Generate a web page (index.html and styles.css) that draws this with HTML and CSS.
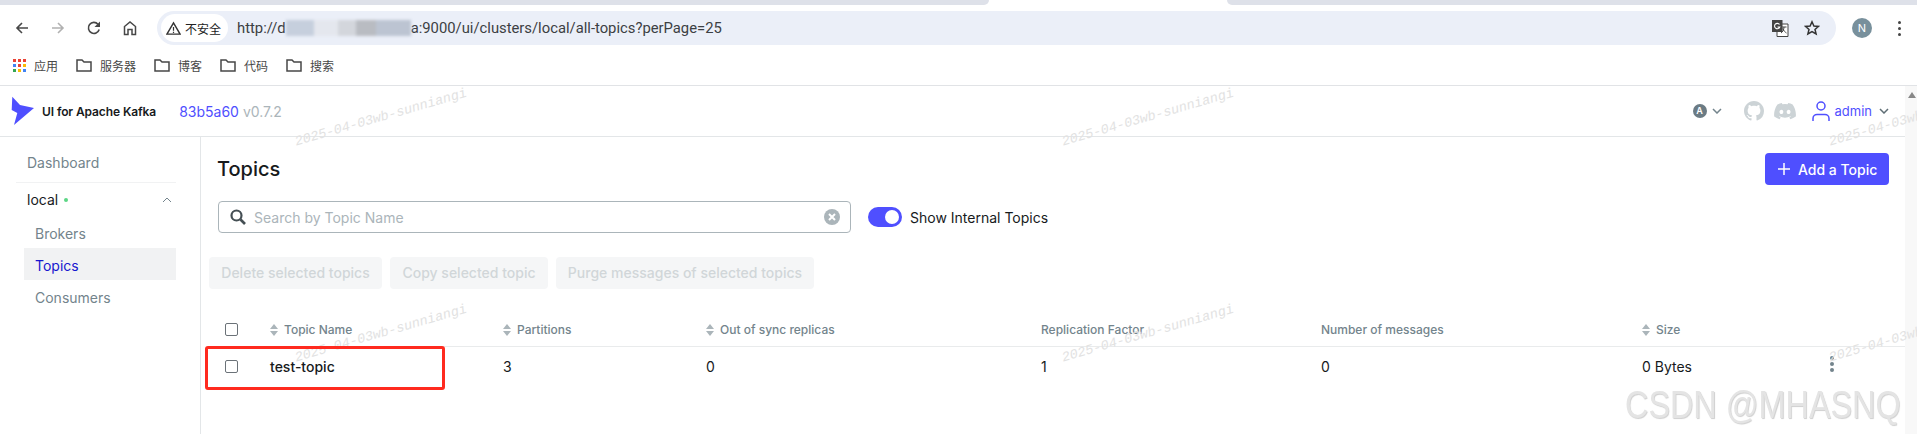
FILE: index.html
```html
<!DOCTYPE html>
<html lang="en">
<head>
    <meta charset="UTF-8">
    <title>UI for Apache Kafka</title>
    <link rel="stylesheet" href="styles.css">
</head>
<body>
    <div class="tabstrip">
        <div class="tab-rest tab-left"></div>
        <div class="tab-active"></div>
        <div class="tab-rest tab-right"></div>
    </div>

    <div class="toolbar">
        <div class="nav-icons">
            <svg class="nav-icon" viewBox="0 0 16 16"><path d="M14 8H3M8 3 3 8l5 5" fill="none" stroke="#474747" stroke-width="1.6"/></svg>
            <svg class="nav-icon" viewBox="0 0 16 16"><path d="M2 8h11M8 3l5 5-5 5" fill="none" stroke="#b1b1b1" stroke-width="1.6"/></svg>
            <svg class="nav-icon" viewBox="0 0 16 16"><path d="M13.2 9.5A5.5 5.5 0 1 1 12 4.2" fill="none" stroke="#474747" stroke-width="1.6"/><path d="M14 1.5V7H8.5z" fill="#474747"/></svg>
            <svg class="nav-icon" viewBox="0 0 16 16"><path d="M2.5 14.5V6.5L8 2l5.500 4.500v8H10V9.500H6v5z" fill="none" stroke="#474747" stroke-width="1.500"/></svg>
        </div>
        <div class="urlbar">
            <div class="secure-chip">
                <svg class="warn-icon" viewBox="0 0 16 16"><path d="M8 2 15 14H1z" fill="none" stroke="#333" stroke-width="1.500"/><path d="M8 6.500v4M8 11.500v1.300" stroke="#333" stroke-width="1.300"/></svg>
                <span>不安全</span>
            </div>
            <div class="url">http://d<span class="url-blur"><i></i><i></i><i></i><i></i><i></i></span>a:9000/ui/clusters/local/all-topics?perPage=25</div>
            <svg class="translate-icon" viewBox="0 0 18 18"><path d="M6 5h11v12.500H6z" fill="#fff" stroke="#444"/><rect x="1" y="1" width="10.500" height="12" fill="#444"/><path d="M8.500 5.500A2.700 2.700 0 1 0 8.800 8H6.500" fill="none" stroke="#fff" stroke-width="1.100"/><path d="M11 8h4.500M13 8c0 3-1.500 5-3 6M11.500 9.500c1 2 2.500 3.500 4 4.500" fill="none" stroke="#444"/></svg>
            <svg class="star-icon" viewBox="0 0 16 16"><path d="m8 1.800 1.900 4.200 4.600.4-3.500 3 1.100 4.500L8 11.500l-4.100 2.400L5 9.400l-3.500-3 4.600-.4z" fill="none" stroke="#333" stroke-width="1.500"/></svg>
        </div>
        <div class="avatar">N</div>
        <div class="chrome-dots"><i></i><i></i><i></i></div>
    </div>

    <div class="bookmarks">
        <div class="apps-grid"><i class="c-red"></i><i class="c-red"></i><i class="c-red"></i><i class="c-blue"></i><i class="c-red"></i><i class="c-yellow"></i><i class="c-green"></i><i class="c-yellow"></i><i class="c-blue"></i></div>
        <span class="bookmark-label first">应用</span>
        <svg class="folder" viewBox="0 0 16 14"><path d="M1 2h5l2 2h7v9H1z" fill="none" stroke="#474747" stroke-width="1.500"/></svg>
        <span class="bookmark-label">服务器</span>
        <svg class="folder" viewBox="0 0 16 14"><path d="M1 2h5l2 2h7v9H1z" fill="none" stroke="#474747" stroke-width="1.500"/></svg>
        <span class="bookmark-label">博客</span>
        <svg class="folder" viewBox="0 0 16 14"><path d="M1 2h5l2 2h7v9H1z" fill="none" stroke="#474747" stroke-width="1.500"/></svg>
        <span class="bookmark-label">代码</span>
        <svg class="folder" viewBox="0 0 16 14"><path d="M1 2h5l2 2h7v9H1z" fill="none" stroke="#474747" stroke-width="1.500"/></svg>
        <span class="bookmark-label">搜索</span>
    </div>

    <div class="app">
        <div class="navbar">
            <svg class="logo" viewBox="0 0 25 30"><path d="M2.300.7 10 9l14 3L4 29l3.300-12-5.600-3z" fill="#4f4fff"/></svg>
            <span class="brand">UI for Apache Kafka</span>
            <span class="version"><span class="commit">83b5a60</span> v0.7.2</span>
            <div class="navbar-right">
                <span class="theme-badge">A</span>
                <svg class="chevron theme-chevron" viewBox="0 0 10 6"><path d="M1 1l4 4 4-4" fill="none" stroke="#73848c" stroke-width="1.500"/></svg>
                <svg class="github" viewBox="0 0 16 16"><path fill="#ccd3d6" d="M8 0C3.580 0 0 3.580 0 8c0 3.540 2.290 6.530 5.470 7.590.4.070.55-.17.550-.38 0-.19-.01-.82-.01-1.490-2.010.37-2.530-.49-2.690-.94-.09-.23-.48-.94-.82-1.130-.28-.15-.68-.52-.01-.53.630-.01 1.080.58 1.230.82.720 1.210 1.870.87 2.330.66.070-.52.280-.87.510-1.070-1.780-.2-3.640-.89-3.640-3.950 0-.87.310-1.590.820-2.150-.08-.2-.36-1.020.08-2.120 0 0 .67-.21 2.200.82.640-.18 1.320-.27 2-.27s1.360.09 2 .27c1.530-1.040 2.200-.82 2.200-.82.440 1.100.16 1.920.08 2.120.51.560.82 1.270.82 2.150 0 3.070-1.870 3.750-3.650 3.950.29.25.54.73.54 1.480 0 1.070-.01 1.930-.01 2.200 0 .21.150.46.550.38A8.010 8.010 0 0 0 16 8c0-4.420-3.580-8-8-8z"/></svg>
                <svg class="discord" viewBox="0 0 22 17"><path fill="#ccd3d6" d="M18.600 1.400A18 18 0 0 0 14.200 0l-.6 1.200a17 17 0 0 0-5.200 0L7.800 0a18 18 0 0 0-4.400 1.400C.6 5.500-.2 9.500.2 13.500A18 18 0 0 0 5.600 16.200l1.100-1.800a11 11 0 0 1-1.700-.8l.4-.3a13 13 0 0 0 11.200 0l.4.300a11 11 0 0 1-1.700.8l1.100 1.800a18 18 0 0 0 5.400-2.700c.5-4.600-.8-8.600-3.200-12.100zM7.400 11.100c-1.100 0-1.900-1-1.900-2.200s.8-2.200 1.900-2.200 2 1 1.900 2.200c0 1.200-.8 2.200-1.900 2.200zm7.200 0c-1.100 0-1.900-1-1.900-2.200s.8-2.200 1.900-2.200 2 1 1.900 2.200c0 1.200-.8 2.200-1.900 2.200z"/></svg>
                <svg class="user-icon" viewBox="0 0 18 20"><circle cx="9" cy="5" r="4" fill="none" stroke="#4f4fff" stroke-width="1.500"/><path d="M1 20v-2.500c0-2.500 2-4 4-4h8c2 0 4 1.500 4 4V20" fill="none" stroke="#4f4fff" stroke-width="1.500"/></svg>
                <span class="admin">admin</span>
                <svg class="chevron" viewBox="0 0 10 6"><path d="M1 1l4 4 4-4" fill="none" stroke="#5f6e75" stroke-width="1.500"/></svg>
            </div>
        </div>

        <div class="layout">
            <div class="sidebar">
                <div class="menu-item dashboard">Dashboard</div>
                <div class="cluster-row">
                    <span class="cluster-name">local</span>
                    <span class="status-dot"></span>
                    <svg class="cluster-toggle" viewBox="0 0 10 6"><path d="M1 5l4-4 4 4" fill="none" stroke="#73848c" stroke-width="1"/></svg>
                </div>
                <div class="menu-item sub">Brokers</div>
                <div class="menu-item sub active">Topics</div>
                <div class="menu-item sub">Consumers</div>
            </div>

            <div class="content">
                <div class="page-head">
                    <h1>Topics</h1>
                    <button class="add-btn" type="button">
                        <svg class="plus" viewBox="0 0 12 12"><path d="M6 0v12M0 6h12" stroke="#fff" stroke-width="1.500"/></svg>
                        Add a Topic
                    </button>
                </div>

                <div class="search-row">
                    <div class="search">
                        <svg class="search-icon" viewBox="0 0 16 16"><circle cx="6.500" cy="6.500" r="5" fill="none" stroke="#454f54" stroke-width="2.200"/><path d="m10.500 10.500 4.500 4.500" stroke="#454f54" stroke-width="2.600"/></svg>
                        <span class="placeholder">Search by Topic Name</span>
                        <svg class="clear-icon" viewBox="0 0 16 16"><circle cx="8" cy="8" r="8" fill="#abb5ba"/><path d="m5 5 6 6m0-6-6 6" stroke="#fff" stroke-width="2"/></svg>
                    </div>
                    <div class="switch"><span class="knob"></span></div>
                    <span class="switch-label">Show Internal Topics</span>
                </div>

                <div class="batch-actions">
                    <div class="batch-btn btn-delete">Delete selected topics</div>
                    <div class="batch-btn btn-copy">Copy selected topic</div>
                    <div class="batch-btn btn-purge">Purge messages of selected topics</div>
                </div>

                <table class="topics">
                    <colgroup>
                        <col class="col-check">
                        <col class="col-name">
                        <col class="col-partitions">
                        <col class="col-sync">
                        <col class="col-replication">
                        <col class="col-messages">
                        <col class="col-size">
                        <col>
                    </colgroup>
                    <thead>
                        <tr>
                            <th><input type="checkbox"></th>
                            <th><svg class="sort" viewBox="0 0 8 12"><path d="M4 0l4 5H0zM4 12 0 7h8z"/></svg>Topic Name</th>
                            <th><svg class="sort" viewBox="0 0 8 12"><path d="M4 0l4 5H0zM4 12 0 7h8z"/></svg>Partitions</th>
                            <th><svg class="sort" viewBox="0 0 8 12"><path d="M4 0l4 5H0zM4 12 0 7h8z"/></svg>Out of sync replicas</th>
                            <th>Replication Factor</th>
                            <th>Number of messages</th>
                            <th><svg class="sort" viewBox="0 0 8 12"><path d="M4 0l4 5H0zM4 12 0 7h8z"/></svg>Size</th>
                            <th></th>
                        </tr>
                    </thead>
                    <tbody>
                        <tr>
                            <td><input type="checkbox"></td>
                            <td class="topic-name">test-topic</td>
                            <td>3</td>
                            <td>0</td>
                            <td>1</td>
                            <td>0</td>
                            <td>0 Bytes</td>
                            <td><div class="row-dots"><i></i><i></i><i></i></div></td>
                        </tr>
                    </tbody>
                </table>
            </div>
            <div class="scrollbar"><span class="scroll-up"></span></div>
        </div>

        <div class="watermarks">
            <span>2025-04-03wb-sunniangi</span>
            <span>2025-04-03wb-sunniangi</span>
            <span>2025-04-03wb-sunniangi</span>
            <span>2025-04-03wb-sunniangi</span>
            <span>2025-04-03wb-sunniangi</span>
            <span>2025-04-03wb-sunniangi</span>
        </div>
        <div class="highlight-box"></div>
        <div class="csdn-mark">CSDN @MHASNQ</div>
    </div>
</body>
</html>
```

FILE: styles.css
```css
* {
    margin: 0;
    padding: 0;
    box-sizing: border-box;
}

html, body {
    width: 1917px;
    height: 434px;
    overflow: hidden;
}

body {
    font-family: Inter, "Noto Sans CJK SC", sans-serif;
    background: #fff;
    position: relative;
}

/* browser chrome */
.tabstrip {
    display: flex;
    height: 5px;
    background: #fff;
}

.tab-rest {
    background: #dee1e9;
    height: 5px;
}

.tab-left {
    width: 989px;
    border-bottom-right-radius: 6px;
}

.tab-active {
    width: 238px;
}

.tab-right {
    flex: 1;
    border-bottom-left-radius: 6px;
}

.toolbar {
    display: flex;
    align-items: center;
    height: 40px;
    padding-top: 6px;
    border-radius: 8px 8px 0 0;
    position: relative;
}

.nav-icons {
    display: flex;
    gap: 20px;
    padding-left: 14px;
    width: 157px;
}

.nav-icon {
    width: 16px;
    height: 16px;
}

.urlbar {
    display: flex;
    align-items: center;
    width: 1679px;
    height: 34px;
    background: #ebeff8;
    border-radius: 17px;
    padding-left: 4px;
}

.secure-chip {
    display: flex;
    align-items: center;
    gap: 4px;
    width: 67px;
    height: 28px;
    padding-left: 5px;
    background: #fff;
    border-radius: 14px;
    font-family: "Noto Sans CJK SC", sans-serif;
    font-size: 12px;
    color: #222;
}

.warn-icon {
    width: 15px;
    height: 15px;
}

.url {
    flex: 1;
    margin-left: 9px;
    font-family: Roboto, sans-serif;
    font-size: 14.800px;
    color: #3c4043;
    white-space: nowrap;
}

.url-blur {
    display: inline-flex;
    width: 125px;
    height: 16px;
    vertical-align: -3px;
    filter: blur(1.500px);
}

.url-blur i {
    display: block;
    height: 100%;
}

.url-blur i:nth-child(1) { width: 28px; background: #c6cfdd; }
.url-blur i:nth-child(2) { width: 24px; background: #e4e7ee; }
.url-blur i:nth-child(3) { width: 18px; background: #d3d6dc; }
.url-blur i:nth-child(4) { width: 20px; background: #b9bcc2; }
.url-blur i:nth-child(5) { width: 35px; background: #bcc4d2; }

.translate-icon {
    width: 18px;
    height: 18px;
    margin-right: 15px;
}

.star-icon {
    width: 16px;
    height: 16px;
    margin-right: 16px;
}

.avatar {
    width: 20px;
    height: 20px;
    margin-left: 16px;
    border-radius: 50%;
    background: #78909c;
    color: #fff;
    font-size: 11px;
    line-height: 20px;
    text-align: center;
}

.chrome-dots, .row-dots {
    display: flex;
    flex-direction: column;
    gap: 3px;
}

.chrome-dots {
    margin-left: 26px;
}

.chrome-dots i {
    display: block;
    width: 3px;
    height: 3px;
    border-radius: 50%;
    background: #444;
}

.bookmarks {
    display: flex;
    align-items: center;
    height: 41px;
    padding-left: 13px;
    border-bottom: 1px solid #e1e3e6;
    font-family: "Noto Sans CJK SC", sans-serif;
    font-size: 12px;
    color: #474747;
}

.apps-grid {
    display: grid;
    grid-template-columns: repeat(3, 3px);
    gap: 2px;
    width: 13px;
}

.apps-grid i {
    display: block;
    height: 3px;
}

.c-red { background: #ea4335; }
.c-blue { background: #4285f4; }
.c-yellow { background: #fbbc04; }
.c-green { background: #34a853; }

.folder {
    width: 16px;
    height: 14px;
    margin-left: 18px;
}

.bookmark-label {
    margin-left: 8px;
}

/* kafka ui */
.app {
    position: relative;
    height: 348px;
}

.navbar {
    display: flex;
    align-items: center;
    height: 51px;
    padding-left: 10px;
    border-bottom: 1px solid #e3e6e8;
}

.logo {
    width: 25px;
    height: 30px;
}

.brand {
    margin-left: 7px;
    font-size: 12px;
    font-weight: 600;
    letter-spacing: -0.1px;
    color: #171a1c;
}

.version {
    margin-left: 23px;
    font-size: 14px;
    color: #abb5ba;
}

.commit {
    color: #4f4fff;
}

.navbar-right {
    display: flex;
    align-items: center;
    margin-left: auto;
    padding-right: 28px;
}

.theme-badge {
    width: 14px;
    height: 14px;
    border-radius: 50%;
    background: #6b7b84;
    color: #fff;
    font-size: 9px;
    font-weight: 600;
    line-height: 14px;
    text-align: center;
}

.chevron {
    width: 10px;
    height: 6px;
    margin-left: 7px;
}

.theme-chevron {
    margin-left: 5px;
    margin-right: 22px;
}

.github {
    width: 20px;
    height: 20px;
    margin-right: 10px;
}

.discord {
    width: 22px;
    height: 17px;
    margin-right: 16px;
}

.user-icon {
    width: 18px;
    height: 20px;
}

.admin {
    margin-left: 5px;
    font-size: 13px;
    color: #4f4fff;
}

.layout {
    display: flex;
    height: 297px;
}

.sidebar {
    flex: none;
    width: 201px;
    padding: 9px 24px 0 16px;
    border-right: 1px solid #e3e6e8;
}

.menu-item {
    display: flex;
    align-items: center;
    height: 32px;
    font-size: 14px;
    color: #73848c;
}

.dashboard {
    padding-left: 11px;
    margin-bottom: 4px;
}

.cluster-row {
    display: flex;
    align-items: center;
    height: 34px;
    padding: 0 4px 0 11px;
    border-top: 1px solid #f1f2f3;
    font-size: 14px;
    color: #171a1c;
}

.status-dot {
    width: 4px;
    height: 4px;
    margin-left: 6px;
    border-radius: 50%;
    background: #5cd685;
}

.cluster-toggle {
    width: 10px;
    height: 6px;
    margin-left: auto;
}

.sub {
    margin-left: 8px;
    padding: 2px 0 0 11px;
}

.sub.active {
    background: #f1f2f3;
    color: #1717cf;
}

.content {
    flex: 1;
    padding: 16px 0 0 8px;
}

.page-head {
    display: flex;
    align-items: center;
    justify-content: space-between;
    height: 32px;
    padding: 0 28px 0 8px;
}

h1 {
    font-size: 20px;
    font-weight: 500;
    color: #171a1c;
}

.add-btn {
    display: flex;
    align-items: center;
    gap: 8px;
    width: 124px;
    height: 32px;
    padding-left: 13px;
    border: none;
    border-radius: 4px;
    background: #4f4fff;
    color: #fff;
    font-family: inherit;
    font-size: 14px;
    font-weight: 500;
}

.plus {
    width: 12px;
    height: 12px;
}

.search-row {
    display: flex;
    align-items: center;
    margin: 16px 0 0 9px;
}

.search {
    display: flex;
    align-items: center;
    width: 633px;
    height: 32px;
    padding: 0 10px 0 11px;
    border: 1px solid #abb5ba;
    border-radius: 4px;
}

.search-icon {
    width: 16px;
    height: 16px;
}

.placeholder {
    margin-left: 8px;
    font-size: 14px;
    color: #abb5ba;
}

.clear-icon {
    width: 16px;
    height: 16px;
    margin-left: auto;
}

.switch {
    display: flex;
    align-items: center;
    justify-content: flex-end;
    width: 34px;
    height: 20px;
    margin-left: 17px;
    padding-right: 3px;
    border-radius: 10px;
    background: #4f4fff;
}

.knob {
    width: 14px;
    height: 14px;
    border-radius: 50%;
    background: #fff;
}

.switch-label {
    margin-left: 8px;
    font-size: 14px;
    color: #171a1c;
}

.batch-actions {
    display: flex;
    gap: 8px;
    margin-top: 24px;
}

.batch-btn {
    height: 32px;
    border-radius: 4px;
    background: #f5f6f7;
    color: #d1d6d9;
    font-size: 14px;
    font-weight: 500;
    line-height: 32px;
    text-align: center;
}

.btn-delete { width: 173px; }
.btn-copy { width: 158px; }
.btn-purge { width: 258px; }

.topics {
    width: 1699px;
    margin-top: 25px;
    table-layout: fixed;
    border-collapse: collapse;
}

.col-check { width: 61px; }
.col-name { width: 233px; }
.col-partitions { width: 203px; }
.col-sync { width: 335px; }
.col-replication { width: 280px; }
.col-messages { width: 321px; }
.col-size { width: 183px; }

th {
    height: 32px;
    border-bottom: 1px solid #e9ebec;
    font-size: 12px;
    font-weight: 500;
    color: #73848c;
    text-align: left;
}

td {
    height: 40px;
    font-size: 14px;
    color: #171a1c;
}

th:first-child, td:first-child {
    padding-left: 16px;
}

input[type="checkbox"] {
    appearance: none;
    display: block;
    width: 13px;
    height: 13px;
    border: 1px solid #6b7278;
    border-radius: 2px;
    background: #fff;
}

.sort {
    width: 8px;
    height: 12px;
    margin-right: 6px;
    vertical-align: -2px;
    fill: #abb5ba;
}

.topic-name {
    font-weight: 500;
}

.row-dots {
    width: 4px;
    margin: 0 0 4px 5px;
    gap: 2px;
}

.row-dots i {
    display: block;
    width: 4px;
    height: 4px;
    border-radius: 50%;
    background: #73848c;
}

.scrollbar {
    position: absolute;
    top: 0;
    right: 0;
    width: 12px;
    height: 100%;
    background: #f8f8f8;
}

.scroll-up {
    position: absolute;
    top: 6px;
    left: 3px;
    border: 4.500px solid transparent;
    border-top: none;
    border-bottom: 6px solid #888;
}

/* overlays on the screenshot */
.watermarks {
    position: absolute;
    top: -20px;
    left: 0;
    right: 0;
    bottom: 0;
    display: grid;
    grid-template-columns: repeat(3, 767px);
    grid-auto-rows: 216px;
    padding: 37px 0 0 266px;
    overflow: hidden;
    pointer-events: none;
}

.watermarks span {
    width: 230px;
    height: 30px;
    font-family: "Liberation Mono", monospace;
    font-size: 13.500px;
    font-style: italic;
    color: #e2e2e2;
    line-height: 30px;
    text-align: center;
    white-space: nowrap;
    transform: rotate(-16deg);
}

.highlight-box {
    position: absolute;
    left: 205px;
    top: 260px;
    width: 240px;
    height: 44px;
    border: 3px solid #ff2a1f;
    border-radius: 3px;
}

.csdn-mark {
    position: absolute;
    left: 1625px;
    top: 296px;
    font-family: "Liberation Sans", sans-serif;
    font-size: 39px;
    line-height: 46px;
    white-space: nowrap;
    color: #e4e4e4;
    text-shadow: 1px 1px 1px #cfcfcf;
    transform: scaleX(0.83);
    transform-origin: left center;
}
```
